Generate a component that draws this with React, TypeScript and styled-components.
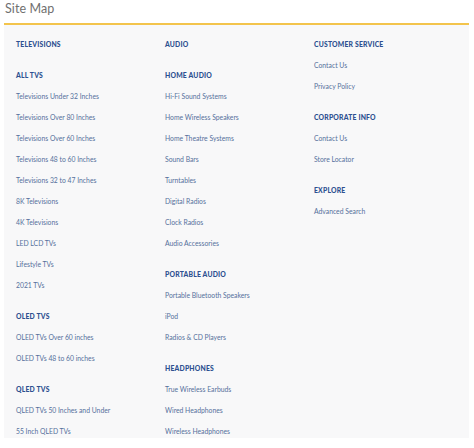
import styled, { createGlobalStyle } from "styled-components";

const GlobalStyle = createGlobalStyle`
  body {
    margin: 0;
    background: #ffffff;
    font-family: Lato, "Liberation Sans", sans-serif;
  }
`;

type Section = { title: string; links: string[] };

const columns: Section[][] = [
  [
    { title: "TELEVISIONS", links: [] },
    {
      title: "ALL TVS",
      links: [
        "Televisions Under 32 Inches",
        "Televisions Over 80 Inches",
        "Televisions Over 60 Inches",
        "Televisions 48 to 60 Inches",
        "Televisions 32 to 47 Inches",
        "8K Televisions",
        "4K Televisions",
        "LED LCD TVs",
        "Lifestyle TVs",
        "2021 TVs",
      ],
    },
    { title: "OLED TVS", links: ["OLED TVs Over 60 inches", "OLED TVs 48 to 60 inches"] },
    { title: "QLED TVS", links: ["QLED TVs 50 Inches and Under", "55 Inch QLED TVs"] },
  ],
  [
    { title: "AUDIO", links: [] },
    {
      title: "HOME AUDIO",
      links: [
        "Hi-Fi Sound Systems",
        "Home Wireless Speakers",
        "Home Theatre Systems",
        "Sound Bars",
        "Turntables",
        "Digital Radios",
        "Clock Radios",
        "Audio Accessories",
      ],
    },
    { title: "PORTABLE AUDIO", links: ["Portable Bluetooth Speakers", "iPod", "Radios & CD Players"] },
    { title: "HEADPHONES", links: ["True Wireless Earbuds", "Wired Headphones", "Wireless Headphones"] },
  ],
  [
    { title: "CUSTOMER SERVICE", links: ["Contact Us", "Privacy Policy"] },
    { title: "CORPORATE INFO", links: ["Contact Us", "Store Locator"] },
    { title: "EXPLORE", links: ["Advanced Search"] },
  ],
];

const App = () => {
  return (
    <Page>
      <GlobalStyle />
      <Title>Site Map</Title>
      <Panel>
        {columns.map((col, i) => (
          <Column key={i}>
            {col.map((section) => (
              <Group key={section.title}>
                <Heading>{section.title}</Heading>
                {section.links.map((link) => (
                  <LinkItem key={link} href="#">
                    {link}
                  </LinkItem>
                ))}
              </Group>
            ))}
          </Column>
        ))}
      </Panel>
    </Page>
  );
};

const Page = styled.div`
  width: 474px;
  height: 448px;
  overflow: hidden;
  padding: 0 5px 0 4px;
  box-sizing: border-box;
`;

const Title = styled.h1`
  margin: 0;
  height: 23px;
  padding-left: 1px;
  font-size: 12.5px;
  font-weight: 400;
  line-height: 18px;
  color: #707070;
  letter-spacing: 0.1px;
`;

const Panel = styled.div`
  display: grid;
  grid-template-columns: 149px 149px 1fr;
  border-top: 2px solid #f3c44c;
  background: #f8f8f9;
  padding: 9px 0 0 12px;
  height: 415px;
  box-sizing: border-box;
`;

const Column = styled.div`
  display: flex;
  flex-direction: column;
`;

const Group = styled.div`
  display: flex;
  flex-direction: column;
  margin-bottom: 10px;
`;

const Heading = styled.div`
  font-size: 6.8px;
  font-weight: 900;
  line-height: 21px;
  color: #2d5090;
  letter-spacing: 0.2px;
`;

const LinkItem = styled.a`
  font-size: 6.8px;
  line-height: 21px;
  color: #56709c;
  text-decoration: none;
`;

export default App;
